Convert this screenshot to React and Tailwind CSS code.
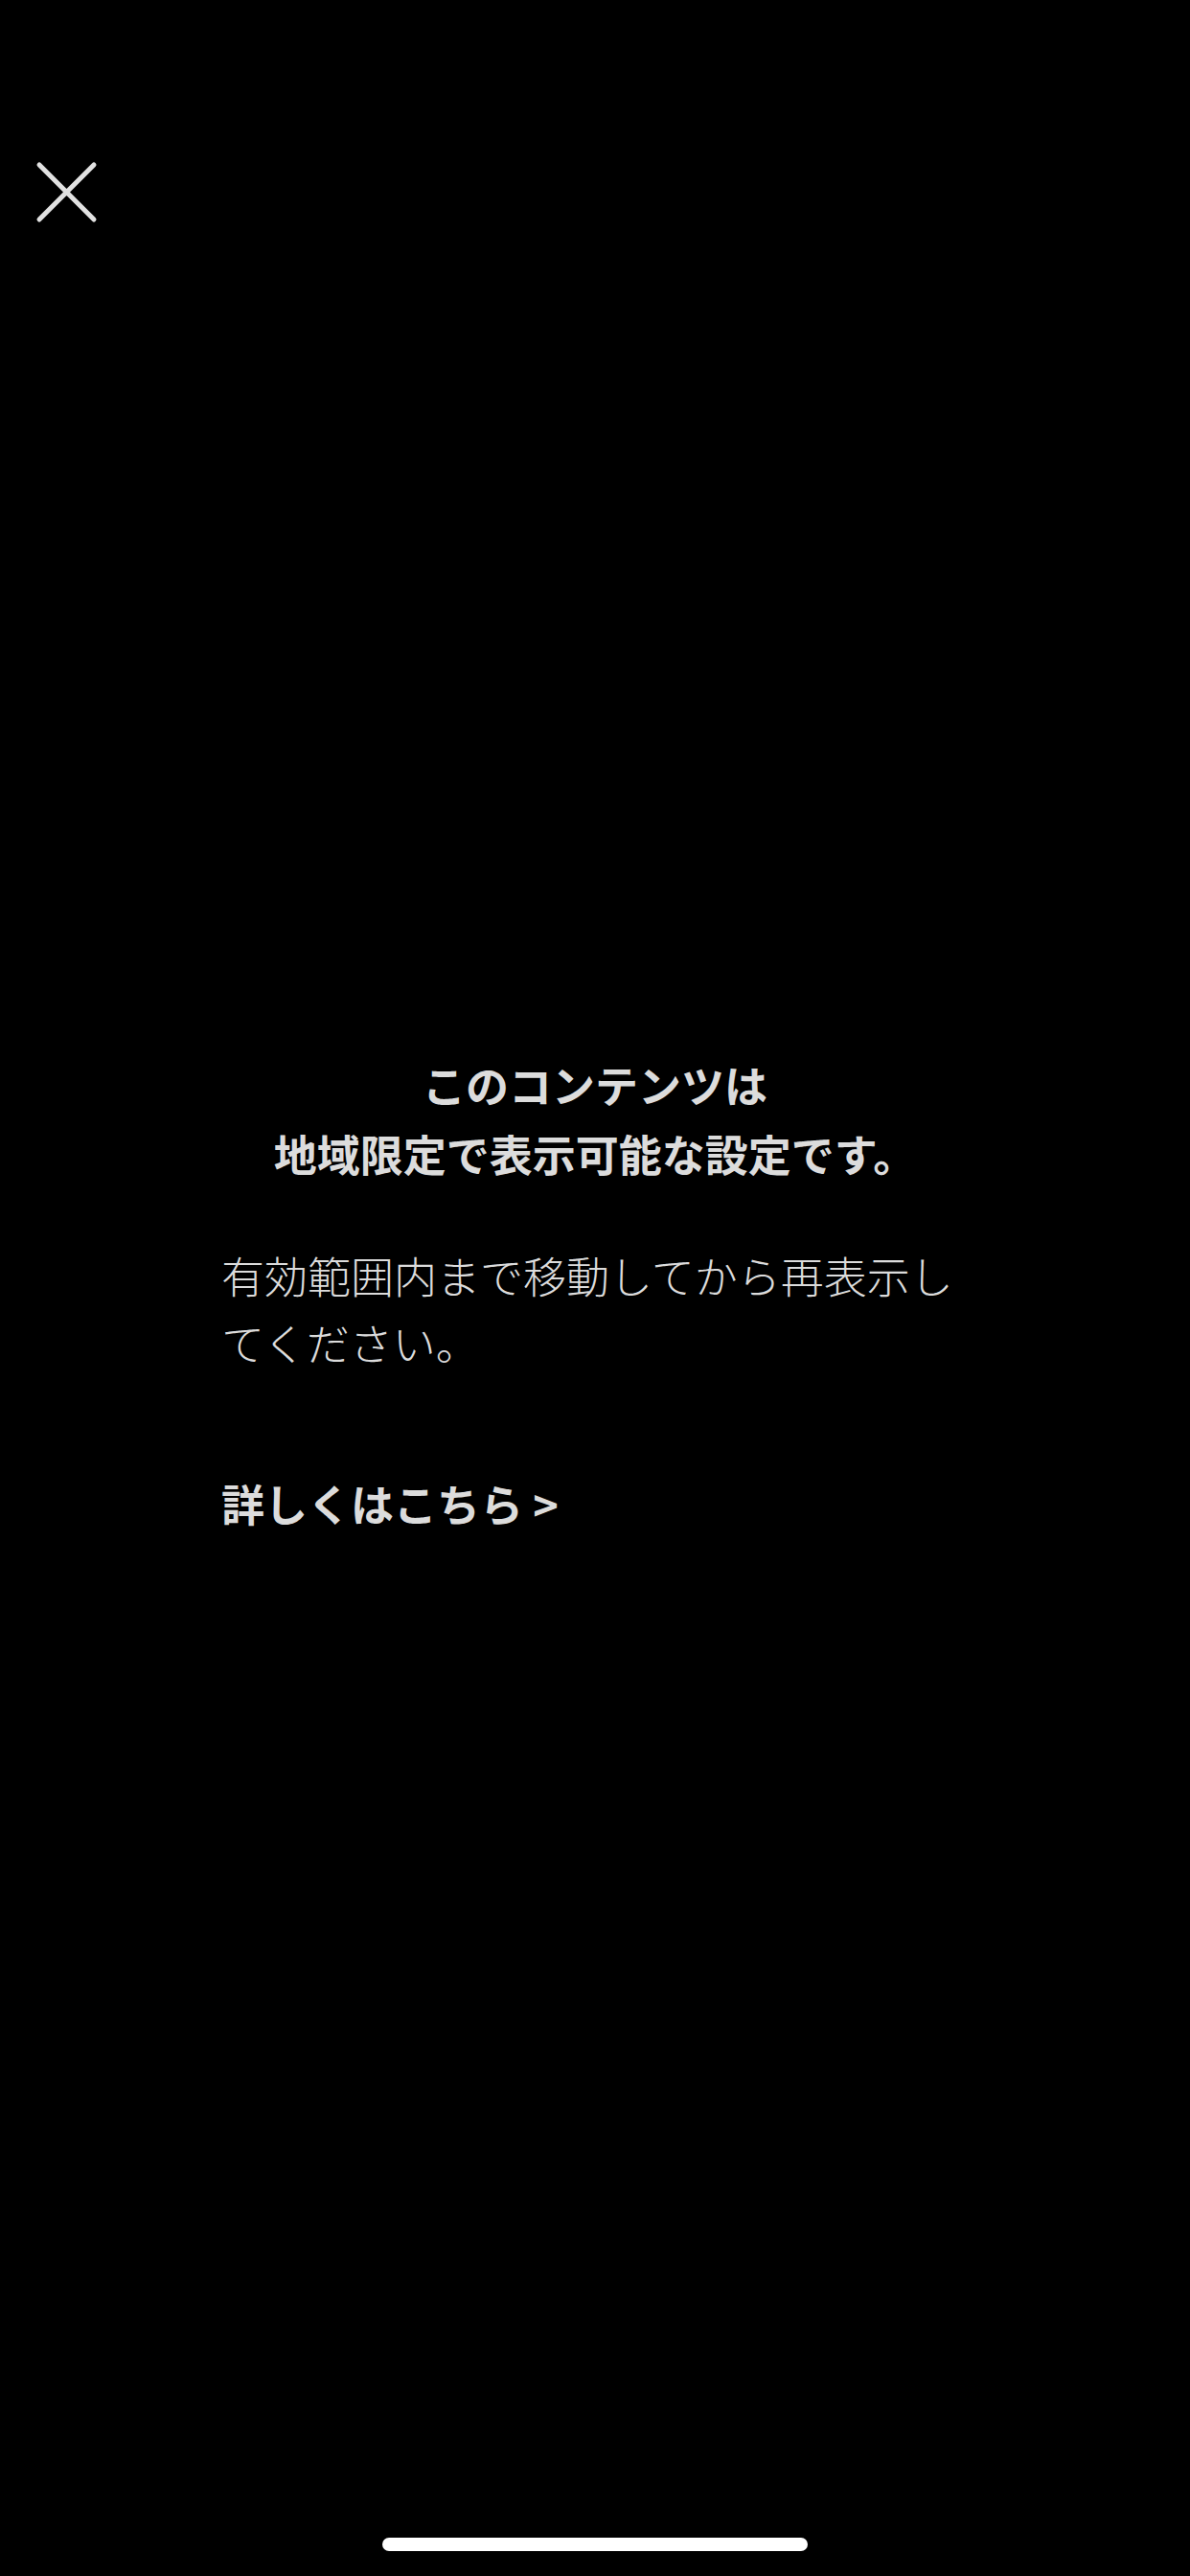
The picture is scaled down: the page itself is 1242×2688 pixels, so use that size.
import React from "react";

export default function App() {
  return (
    <div
      className="w-[1242px] h-[2688px] bg-black flex flex-col relative overflow-hidden"
      style={{ fontFamily: '"Noto Sans CJK JP", "Noto Sans", sans-serif' }}
    >
      <div className="pt-[168px] pl-[37px]">
        <svg width="65" height="65" viewBox="0 0 65 65" className="block">
          <path
            d="M4 4 L61 61 M61 4 L4 61"
            stroke="#e2e2e2"
            strokeWidth="5"
            strokeLinecap="round"
            fill="none"
          />
        </svg>
      </div>

      <div className="mt-[863px] px-[231px] flex flex-col text-[#dcdcdc]">
        <h1 className="text-center font-bold text-[45px] leading-[72px]">
          このコンテンツは
          <br />
          地域限定で表示可能な設定です。
        </h1>
        <p className="mt-[56px] text-[45px] leading-[70px] font-light">
          有効範囲内まで移動してから再表示してください。
        </p>
        <div className="mt-[98px] text-[45px] leading-[70px] font-bold">
          詳しくはこちら &gt;
        </div>
      </div>

      <div className="absolute left-[399px] top-[2648px] w-[444px] h-[14px] rounded-full bg-white" />
    </div>
  );
}
